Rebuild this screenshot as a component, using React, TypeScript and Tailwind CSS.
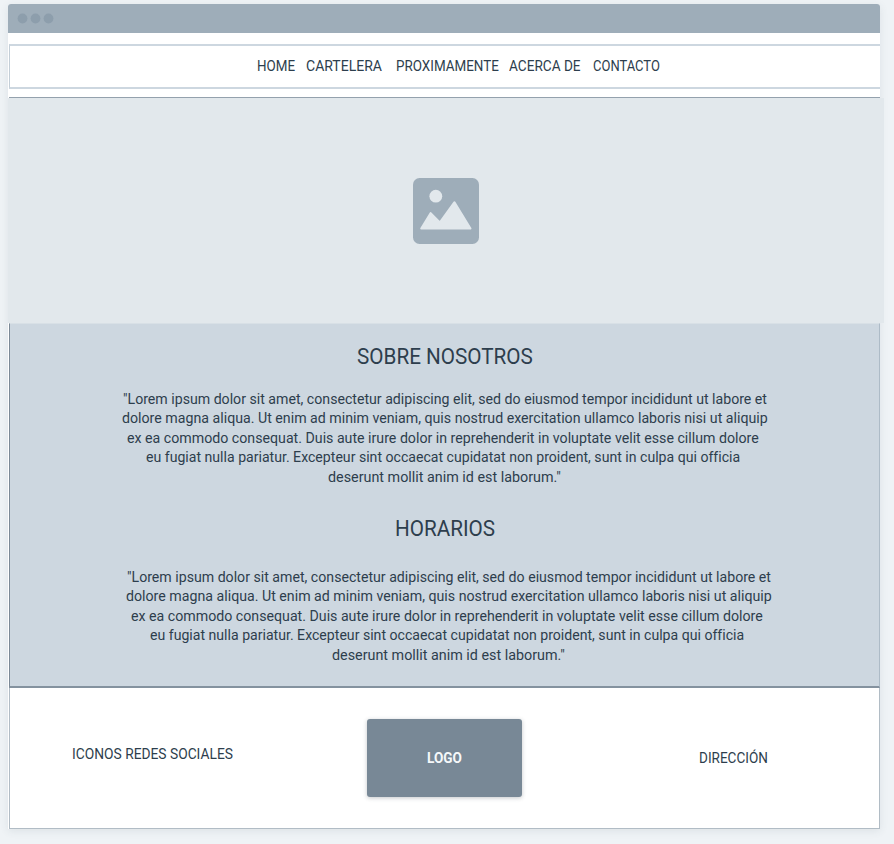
import { useLayoutEffect, useRef, useState } from "react";
import type { ReactNode } from "react";
import clsx from "clsx";

/* One line of text, condensed or widened so that it fills its box exactly. */
function Fit({ className, children }: { className: string; children: ReactNode }) {
  const box = useRef<HTMLSpanElement>(null);
  const text = useRef<HTMLSpanElement>(null);
  const [scale, setScale] = useState(1);

  useLayoutEffect(() => {
    if (box.current && text.current) {
      setScale(box.current.offsetWidth / text.current.offsetWidth);
    }
  }, []);

  return (
    <span ref={box} className={clsx("block shrink-0 whitespace-nowrap", className)}>
      <span ref={text} className="inline-block origin-left" style={{ transform: `scaleX(${scale})` }}>
        {children}
      </span>
    </span>
  );
}

const links = [
  { label: "HOME", box: "w-[38px]" },
  { label: "CARTELERA", box: "ml-[11px] w-[76px]" },
  { label: "PROXIMAMENTE", box: "ml-[14px] w-[103px]" },
  { label: "ACERCA DE", box: "ml-[10px] w-[72px]" },
  { label: "CONTACTO", box: "ml-[12px] w-[67px]" },
];

const lorem = [
  { text: '"Lorem ipsum dolor sit amet, consectetur adipiscing elit, sed do eiusmod tempor incididunt ut labore et', box: "h-[19px] ml-px w-[644px]" },
  { text: "dolore magna aliqua. Ut enim ad minim veniam, quis nostrud exercitation ullamco laboris nisi ut aliquip", box: "h-[20px] w-[646px]" },
  { text: "ex ea commodo consequat. Duis aute irure dolor in reprehenderit in voluptate velit esse cillum dolore", box: "h-[19px] ml-[5px] w-[632px]" },
  { text: "eu fugiat nulla pariatur. Excepteur sint occaecat cupidatat non proident, sunt in culpa qui officia", box: "h-[20px] ml-[24px] w-[594px]" },
  { text: 'deserunt mollit anim id est laborum."', box: "h-[19px] ml-[206px] w-[233px]" },
];

function Paragraph({ className }: { className: string }) {
  return (
    <div className={clsx("w-[650px] text-[15.5px] leading-[20px]", className)}>
      {lorem.map((line) => (
        <Fit key={line.text} className={line.box}>{line.text}</Fit>
      ))}
    </div>
  );
}

function ImageIcon() {
  return (
    <svg viewBox="0 0 66 66" className="h-[66px] w-[66px]">
      <rect width="66" height="66" rx="6.5" fill="#9eadb9" />
      <circle cx="22.8" cy="18.2" r="6.4" fill="#e2e8ec" />
      <path
        d="M8.3 50.5 L17.6 35.2 L26.8 44.6 L41.4 24.4 L57.4 50.5 Z"
        fill="#e2e8ec"
        stroke="#e2e8ec"
        strokeWidth="2.2"
        strokeLinejoin="round"
      />
    </svg>
  );
}

export default function App() {
  return (
    <div className="h-[844px] w-[894px] overflow-hidden bg-[#eff3f6] pt-1 pl-2 font-[Roboto,sans-serif] text-[#2d3e4d] [font-variant-ligatures:none]">
      <div className="flex h-[825px] w-[872px] flex-col rounded-t-[3px] bg-white shadow-[0_2px_9px_rgba(60,80,90,0.1)]">
        <header className="flex h-[29px] shrink-0 items-center rounded-t-[3px] bg-[#9eadb9]">
          <svg viewBox="0 0 50 29" className="h-[29px] w-[50px]" fill="#8d9eac">
            <circle cx="14.5" cy="14.5" r="4.9" />
            <circle cx="27.5" cy="14.5" r="4.9" />
            <circle cx="40.5" cy="14.5" r="4.9" />
          </svg>
        </header>

        <nav className="mt-[11px] ml-px flex h-[45px] shrink-0 items-center border-y-2 border-l border-y-[#cdd7e0] border-l-[#c3ced7] pb-[2px] pl-[246.5px] text-[15.5px] leading-5">
          {links.map((link) => (
            <Fit key={link.label} className={link.box}>{link.label}</Fit>
          ))}
        </nav>

        <div className="mt-2 ml-px h-px shrink-0 bg-[#94a1ad]" />
        <section className="flex h-[225px] w-[876px] shrink-0 items-center justify-center bg-[#e2e8ec]">
          <ImageIcon />
        </section>

        <section className="ml-px h-[365px] shrink-0 border-x border-t border-b-2 border-t-[#d8e0e6] border-r-[#adbbc7] border-b-[#84929f] border-l-[#7b8996] bg-[#cdd7e0]">
          <h2 className="mt-[20px] ml-[347px] text-[21.5px] leading-[26px]"><Fit className="w-[176px]">SOBRE NOSOTROS</Fit></h2>
          <Paragraph className="mt-[19px] ml-[112px]" />
          <h2 className="mt-[30px] ml-[384.5px] text-[21.5px] leading-[26px]"><Fit className="w-[100px]">HORARIOS</Fit></h2>
          <Paragraph className="mt-[25px] ml-[116px]" />
        </section>

        <footer className="ml-px flex h-[141px] shrink-0 items-start border-x border-b border-[#b1bcc5] text-[15.5px] leading-5">
          <Fit className="mt-[56px] ml-[62px] w-[161px]">ICONOS REDES SOCIALES</Fit>
          <div className="mt-[31px] ml-[134px] flex h-[78px] w-[155px] shrink-0 items-center justify-center rounded-[3px] bg-[#788896] font-bold text-[#f5f8fa] shadow-[0_1px_4px_rgba(60,70,80,0.3)]">
            <Fit className="w-[35px]">LOGO</Fit>
          </div>
          <Fit className="mt-[60px] ml-[177px] w-[69px]">DIRECCIÓN</Fit>
        </footer>
      </div>
    </div>
  );
}
